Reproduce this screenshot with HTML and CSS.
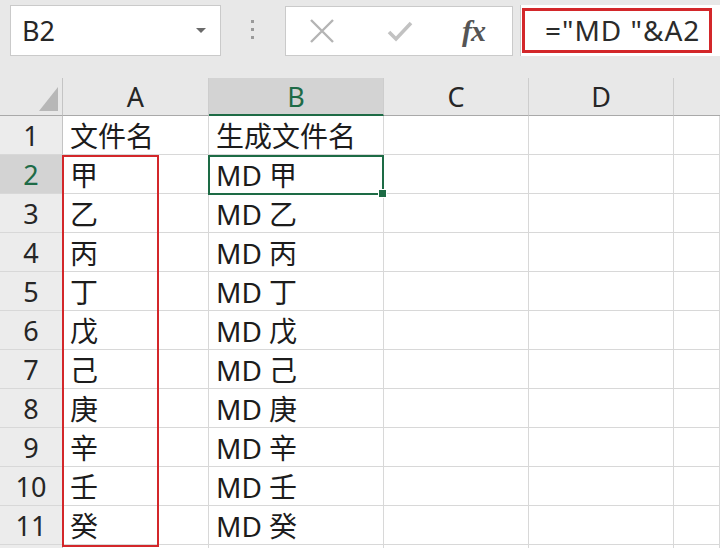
FILE: index.html
```html
<!DOCTYPE html>
<html lang="zh-CN">
<head>
    <meta charset="UTF-8">
    <meta name="viewport" content="width=device-width, initial-scale=1.0">
    <title>生成文件名</title>
    <link rel="stylesheet" href="styles.css">
</head>
<body>
    <!-- Formula bar -->
    <div class="toolbar">
        <div class="namebox">
            <span class="cell-ref">B2</span>
            <span class="caret"></span>
        </div>
        <div class="grip"><i></i><i></i><i></i></div>
        <div class="fx-buttons">
            <svg class="btn-icon" width="26" height="26" viewBox="0 0 26 26">
                <path d="M2 2 L24 24 M24 2 L2 24" stroke="#b4b4b4" stroke-width="2.4" fill="none"/>
            </svg>
            <svg class="btn-icon" width="26" height="22" viewBox="0 0 26 22">
                <path d="M2 12 L9 19 L24 3" stroke="#c2c2c2" stroke-width="3.6" fill="none"/>
            </svg>
            <span class="fx">fx</span>
        </div>
        <div class="formula">
            <div class="formula-box">="MD "&amp;A2</div>
        </div>
    </div>

    <!-- Sheet -->
    <div class="sheet">
        <div class="corner"><span class="corner-tri"></span></div>
        <div class="col-head">A</div>
        <div class="col-head active">B</div>
        <div class="col-head">C</div>
        <div class="col-head">D</div>
        <div class="col-head last"></div>

        <div class="row-head">1</div><div class="cell">文件名</div><div class="cell">生成文件名</div><div class="cell"></div><div class="cell"></div><div class="cell"></div>
        <div class="row-head active">2</div><div class="cell">甲</div><div class="cell">MD 甲</div><div class="cell"></div><div class="cell"></div><div class="cell"></div>
        <div class="row-head">3</div><div class="cell">乙</div><div class="cell">MD 乙</div><div class="cell"></div><div class="cell"></div><div class="cell"></div>
        <div class="row-head">4</div><div class="cell">丙</div><div class="cell">MD 丙</div><div class="cell"></div><div class="cell"></div><div class="cell"></div>
        <div class="row-head">5</div><div class="cell">丁</div><div class="cell">MD 丁</div><div class="cell"></div><div class="cell"></div><div class="cell"></div>
        <div class="row-head">6</div><div class="cell">戊</div><div class="cell">MD 戊</div><div class="cell"></div><div class="cell"></div><div class="cell"></div>
        <div class="row-head">7</div><div class="cell">己</div><div class="cell">MD 己</div><div class="cell"></div><div class="cell"></div><div class="cell"></div>
        <div class="row-head">8</div><div class="cell">庚</div><div class="cell">MD 庚</div><div class="cell"></div><div class="cell"></div><div class="cell"></div>
        <div class="row-head">9</div><div class="cell">辛</div><div class="cell">MD 辛</div><div class="cell"></div><div class="cell"></div><div class="cell"></div>
        <div class="row-head">10</div><div class="cell">壬</div><div class="cell">MD 壬</div><div class="cell"></div><div class="cell"></div><div class="cell"></div>
        <div class="row-head">11</div><div class="cell">癸</div><div class="cell">MD 癸</div><div class="cell"></div><div class="cell"></div><div class="cell"></div>
        <div class="row-head"></div><div class="cell"></div><div class="cell"></div><div class="cell"></div><div class="cell"></div><div class="cell"></div>

        <!-- selection + annotation -->
        <div class="selection"><span class="handle"></span></div>
        <div class="mark"></div>
    </div>
</body>
</html>
```

FILE: styles.css
```css
body {
    margin: 0;
    background: #fff;
    font-family: "Noto Sans", "Noto Sans CJK SC", sans-serif;
    color: #1c1c1c;
    overflow: hidden;
}
.toolbar {
    display: flex;
    align-items: flex-start;
    height: 78px;
    padding-top: 5px;
    box-sizing: border-box;
    background: #e8e8e8;
}
.namebox {
    display: flex;
    align-items: center;
    justify-content: space-between;
    margin-left: 10px;
    width: 211px;
    height: 51px;
    padding: 0 14px 0 11px;
    box-sizing: border-box;
    background: #fff;
    border: 1px solid #cacaca;
}
.cell-ref {
    font-size: 27px;
    color: #262626;
}
.caret {
    width: 0;
    height: 0;
    border-left: 5px solid transparent;
    border-right: 5px solid transparent;
    border-top: 5px solid #6a6a6a;
}
.grip {
    display: flex;
    flex-direction: column;
    gap: 5px;
    margin: 15px 0 0 30px;
}
.grip i {
    display: block;
    width: 3px;
    height: 3px;
    background: #9a9a9a;
}
.fx-buttons {
    display: flex;
    align-items: center;
    margin: 1px 0 0 31px;
    width: 228px;
    height: 50px;
    padding-left: 23px;
    box-sizing: border-box;
    background: #fff;
    border: 1px solid #cacaca;
}
.btn-icon {
    margin-right: 52px;
}
.btn-icon + .btn-icon {
    margin-right: 49px;
}
.fx {
    font-family: "Liberation Serif", serif;
    font-style: italic;
    font-weight: bold;
    font-size: 30px;
    color: #555;
    letter-spacing: -1px;
}
.formula {
    flex: 1;
    height: 51px;
    margin-left: 7px;
    padding: 3px 0 0 1px;
    box-sizing: border-box;
    background: #fff;
    border-left: 1px solid #cacaca;
}
.formula-box {
    width: 190px;
    height: 45px;
    padding-left: 20px;
    box-sizing: border-box;
    border: 3px solid #d3272a;
    font-size: 28px;
    line-height: 39px;
    color: #2b2b2b;
    white-space: pre;
    letter-spacing: 1px;
}

/* grid */
.sheet {
    position: relative;
    display: grid;
    grid-template-columns: 63px 146px 175px 145px 145px 1fr;
    grid-template-rows: 38px repeat(12, 39px);
}
.corner {
    display: flex;
    align-items: flex-end;
    justify-content: flex-end;
    padding: 0 4px 4px 0;
    background: #e8e8e8;
    border-right: 1px solid #c4c4c4;
    border-bottom: 1px solid #a9a9a9;
}
.corner-tri {
    width: 0;
    height: 0;
    border-left: 19px solid transparent;
    border-bottom: 24px solid #b7b7b7;
}
.col-head {
    display: flex;
    align-items: center;
    justify-content: center;
    background: #e8e8e8;
    border-right: 1px solid #cdcdcd;
    border-bottom: 1px solid #a9a9a9;
    font-size: 27px;
    color: #262626;
}
.col-head.active {
    background: #d3d3d3;
    color: #1e6b47;
    border-bottom: 2px solid #1d6b45;
}
.col-head.last {
    border-right: none;
}
.row-head {
    display: flex;
    align-items: center;
    justify-content: center;
    background: #ececec;
    border-right: 1px solid #c4c4c4;
    border-bottom: 1px solid #d8d8d8;
    font-size: 27px;
    color: #262626;
}
.row-head.active {
    background: #d3d3d3;
    color: #1e6b47;
}
.cell {
    display: flex;
    align-items: center;
    padding-left: 7px;
    border-right: 1px solid #d8d8d8;
    border-bottom: 1px solid #d8d8d8;
    font-size: 28px;
    white-space: nowrap;
}
.selection {
    position: absolute;
    left: 208px;
    top: 77px;
    width: 176px;
    height: 40px;
    box-sizing: border-box;
    border: 2px solid #1d6b45;
}
.handle {
    position: absolute;
    right: -5px;
    bottom: -5px;
    width: 7px;
    height: 7px;
    background: #1d6b45;
    border: 1px solid #fff;
}
.mark {
    position: absolute;
    left: 62px;
    top: 77px;
    width: 97px;
    height: 392px;
    box-sizing: border-box;
    border: 2px solid #d3272a;
}
```
